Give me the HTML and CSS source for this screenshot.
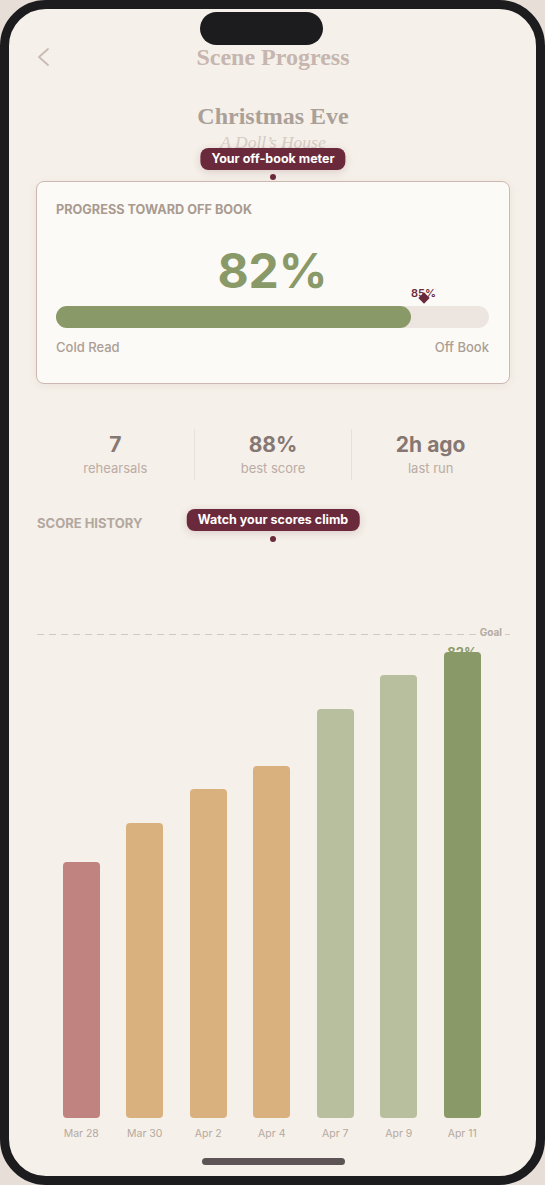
FILE: index.html
```html
<!DOCTYPE html>
<html>
<head>
<meta charset="utf-8">
<link rel="stylesheet" href="styles.css">
</head>
<body>
<div class="phone">
  <div class="notch"></div>
  <div class="screen">
    <header class="topbar">
      <svg class="back" width="14" height="20" viewBox="0 0 14 20"><polyline points="12,2 3,10 12,18" fill="none" stroke="#c9bbb3" stroke-width="1.8" stroke-linecap="round" stroke-linejoin="round"/></svg>
      <h1 class="page-title">Scene Progress</h1>
    </header>

    <section class="scene">
      <h2 class="scene-title">Christmas Eve</h2>
      <p class="scene-play">A Doll’s House</p>
      <div class="tip tip-meter">Your off-book meter</div>
      <span class="tip-dot tip-dot-meter"></span>
    </section>

    <section class="card">
      <div class="card-label">PROGRESS TOWARD OFF BOOK</div>
      <div class="big-pct">82%</div>
      <div class="meter">
        <div class="meter-fill" style="width:82%"></div>
        <div class="goal-mark" style="left:85%">
          <span class="goal-mark-label">85%</span>
          <span class="goal-mark-diamond"></span>
        </div>
      </div>
      <div class="meter-ends"><span>Cold Read</span><span>Off Book</span></div>
    </section>

    <section class="stats">
      <div class="stat"><div class="stat-val">7</div><div class="stat-lbl">rehearsals</div></div>
      <div class="stat"><div class="stat-val">88%</div><div class="stat-lbl">best score</div></div>
      <div class="stat"><div class="stat-val">2h ago</div><div class="stat-lbl">last run</div></div>
    </section>

    <section class="history-head">
      <span class="history-label">SCORE HISTORY</span>
      <div class="tip tip-history">Watch your scores climb</div>
      <span class="tip-dot tip-dot-history"></span>
    </section>

    <section class="chart">
      <div class="goal-line" style="bottom:85%"><span class="goal-text">Goal</span></div>
      <div class="bars">
        <div class="col"><div class="bar rose" style="height:45%"></div></div>
        <div class="col"><div class="bar tan" style="height:52%"></div></div>
        <div class="col"><div class="bar tan" style="height:58%"></div></div>
        <div class="col"><div class="bar tan" style="height:62%"></div></div>
        <div class="col"><div class="bar sage" style="height:72%"></div></div>
        <div class="col"><div class="bar sage" style="height:78%"></div></div>
        <div class="col"><span class="bar-val">82%</span><div class="bar green" style="height:82%"></div></div>
      </div>
    </section>
    <div class="dates">
      <span>Mar 28</span><span>Mar 30</span><span>Apr 2</span><span>Apr 4</span><span>Apr 7</span><span>Apr 9</span><span>Apr 11</span>
    </div>

    <div class="home-indicator"></div>
  </div>
</div>
</body>
</html>
```

FILE: styles.css
```css
* { box-sizing: border-box; }
html, body { margin: 0; padding: 0; }
body {
  background: #e7dfd7;
  font-family: Inter, "Noto Sans", sans-serif;
  width: 545px;
  height: 1185px;
  overflow: hidden;
}
.phone {
  position: relative;
  width: 545px;
  height: 1185px;
  border: 9px solid #1c1b1e;
  border-radius: 46px;
  background: #f5f0e9;
  overflow: hidden;
}
.notch {
  position: absolute;
  left: 191px;
  top: 3px;
  width: 123px;
  height: 33px;
  border-radius: 17px;
  background: #1c1b1e;
  z-index: 5;
}
.screen {
  display: flex;
  flex-direction: column;
  padding: 0 26px 0 27px;
  height: 100%;
}
.topbar {
  position: relative;
  display: flex;
  align-items: center;
  justify-content: center;
  margin-top: 36px;
  height: 24px;
}
.back {
  position: absolute;
  left: 0;
  top: 2px;
}
.page-title {
  margin: 0;
  font-family: "Liberation Serif", serif;
  font-weight: 700;
  font-size: 24px;
  line-height: 24px;
  color: #c6b6af;
}
.scene {
  position: relative;
  display: flex;
  flex-direction: column;
  align-items: center;
  margin-top: 33px;
}
.scene-title {
  margin: 0;
  font-family: "Liberation Serif", serif;
  font-weight: 700;
  font-size: 24px;
  line-height: 28px;
  color: #aba098;
}
.scene-play {
  margin: 2px 0 0;
  font-family: "Liberation Serif", serif;
  font-style: italic;
  font-size: 17.5px;
  line-height: 20px;
  color: #d5cbc4;
}
.tip {
  position: absolute;
  left: 50%;
  transform: translateX(-50%);
  height: 22px;
  padding: 0 11px;
  border-radius: 8px;
  background: #6b2a3b;
  color: #ffffff;
  font-weight: 700;
  font-size: 12.5px;
  line-height: 22px;
  white-space: nowrap;
  box-shadow: 0 2px 8px rgba(107, 42, 59, 0.18);
  z-index: 4;
}
.tip-dot {
  position: absolute;
  left: 50%;
  width: 6px;
  height: 6px;
  margin-left: -3px;
  border-radius: 50%;
  background: #6b2a3b;
  z-index: 4;
}
.tip-meter { top: 46px; }
.tip-dot-meter { top: 72px; }

.card {
  margin-top: 29px;
  background: #fcfaf7;
  border: 1px solid #ccb8b0;
  border-radius: 8px;
  box-shadow: 0 2px 8px rgba(120, 90, 80, 0.08);
  padding: 20px 20px 28px 19px;
}
.card-label {
  font-weight: 700;
  font-size: 12.7px;
  line-height: 16px;
  color: #a99b90;
}
.big-pct {
  margin-top: 25px;
  text-align: center;
  font-weight: 700;
  font-size: 48px;
  line-height: 56px;
  color: #8a9968;
}
.meter {
  position: relative;
  margin-top: 7px;
  height: 22px;
  border-radius: 11px;
  background: #ede5e0;
}
.meter-fill {
  height: 100%;
  border-radius: 11px;
  background: #8a9968;
}
.goal-mark {
  position: absolute;
  top: -20px;
  width: 0;
}
.goal-mark-label {
  position: absolute;
  left: -13px;
  top: 0;
  font-weight: 600;
  font-size: 11px;
  line-height: 14px;
  color: #6b2a3b;
}
.goal-mark-diamond {
  position: absolute;
  left: -4px;
  top: 8px;
  width: 8px;
  height: 8px;
  background: #6b2a3b;
  transform: rotate(45deg);
}
.meter-ends {
  display: flex;
  justify-content: space-between;
  margin-top: 11px;
  font-size: 13px;
  line-height: 16px;
  color: #ab9e94;
  font-weight: 500;
}

.stats {
  display: flex;
  margin-top: 45px;
  padding: 0 1px;
}
.stat {
  flex: 1;
  text-align: center;
  padding: 3px 0 3px;
}
.stat + .stat { border-left: 1px solid #e9e0d9; }
.stat-val {
  font-weight: 700;
  font-size: 21px;
  line-height: 26px;
  color: #867772;
}
.stat-lbl {
  margin-top: 1px;
  font-size: 13px;
  line-height: 18px;
  color: #bbaca5;
}

.history-head {
  position: relative;
  margin-top: 32px;
  height: 16px;
  padding-left: 1px;
}
.history-label {
  font-weight: 700;
  font-size: 13px;
  line-height: 16px;
  color: #b2a89f;
}
.tip-history { top: -3px; }
.tip-dot-history { top: 24px; }

.chart {
  position: relative;
  margin-top: 22px;
  height: 568px;
}
.goal-line {
  position: absolute;
  left: 1px;
  right: 0;
  height: 1.5px;
  background: repeating-linear-gradient(to right, #d3c9c0 0 7px, transparent 7px 12px);
}
.goal-text {
  position: absolute;
  right: 5px;
  top: -9px;
  padding: 0 3px;
  background: #f5f0e9;
  font-weight: 700;
  font-size: 10px;
  line-height: 14px;
  color: #b4aaa1;
}
.bars {
  display: grid;
  grid-template-columns: repeat(7, 63.5px);
  height: 100%;
  padding-left: 13.5px;
}
.col {
  display: flex;
  flex-direction: column;
  align-items: center;
  justify-content: flex-end;
  height: 100%;
}
.bar {
  width: 37px;
  border-radius: 4px;
}
.bar-val {
  margin-bottom: -8px;
  font-weight: 700;
  font-size: 13px;
  line-height: 16px;
  color: #8a9968;
}
.rose { background: #c1837f; }
.tan { background: #d9b17f; }
.sage { background: #b8bf9e; }
.green { background: #8a9968; }

.dates {
  display: grid;
  grid-template-columns: repeat(7, 63.5px);
  padding-left: 13.5px;
  margin-top: 9px;
  font-size: 10.5px;
  line-height: 14px;
  color: #b5a9a0;
  text-align: center;
}
.home-indicator {
  align-self: center;
  margin-top: 17px;
  width: 143px;
  height: 7px;
  border-radius: 4px;
  background: #5c5455;
}
```
